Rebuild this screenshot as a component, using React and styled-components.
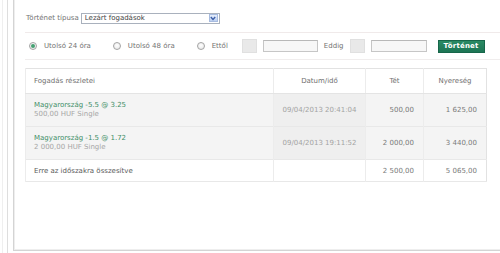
import React from 'react'
import styled, { createGlobalStyle } from 'styled-components'

const GlobalStyle = createGlobalStyle`
  html, body {
    margin: 0;
    padding: 0;
    background: #fff;
  }
  body {
    font-family: 'DejaVu Sans', Verdana, sans-serif;
    font-size: 7px;
    color: #707070;
  }
`

const Shell = styled.div`
  height: 253px;
  padding-left: 2px;
  box-sizing: border-box;
  display: flex;
`

const Rail = styled.div`
  flex: 1;
  display: flex;
  border-left: 1px solid #efefef;
  padding-left: 4px;
`

const InnerRail = styled.div`
  flex: 1;
  display: flex;
  align-items: flex-start;
  border-left: 1px solid #dedede;
  padding-left: 5px;
`

const Panel = styled.div`
  width: 483px;
  height: 250px;
  border: 1px solid #d4d4d4;
  border-top: none;
  box-shadow: inset 1px 0 0 #eeeeee, inset -1px 0 0 #eeeeee, inset 0 -1px 0 #eeeeee;
  padding: 0 10px 0 11px;
  box-sizing: content-box;
  background: #fff;
`

const TypeRow = styled.div`
  display: flex;
  align-items: center;
  gap: 2px;
  height: 12px;
  margin-top: 12px;
  padding: 0 0 8px 1px;
  border-bottom: 1px solid #f0eaea;
`

const Label = styled.span`
  color: ${p => p.$color || '#737373'};
  white-space: nowrap;
`

const SelectBox = styled.div`
  width: 133px;
  height: 9px;
  border: 1px solid #a9b1bd;
  display: flex;
  align-items: center;
  justify-content: space-between;
  padding: 0 1px 0 3px;
  box-sizing: content-box;
  color: #444;
  background: #fff;
`

const ArrowBox = styled.span`
  width: 9px;
  height: 8px;
  border: 1px solid #a7bbdf;
  background: linear-gradient(#e6eefb, #bdd0f1);
  display: flex;
  align-items: center;
  justify-content: center;
  box-sizing: border-box;
`

const RangeRow = styled.div`
  display: flex;
  align-items: center;
  height: 26px;
  padding-left: 4px;
  border-bottom: 1px solid #f0eded;
`

const RadioItem = styled.label`
  display: flex;
  align-items: center;
  gap: 7px;
  margin-right: ${p => p.$gap || 0}px;
`

const RadioDot = styled.span`
  width: 8px;
  height: 8px;
  border-radius: 50%;
  border: 1px solid #a4a4a4;
  background: radial-gradient(circle at 50% 40%, #fff, #e4e4e4);
  box-sizing: border-box;
  display: flex;
  align-items: center;
  justify-content: center;
  &::after {
    content: '';
    width: 4px;
    height: 4px;
    border-radius: 50%;
    background: ${p => (p.$checked ? '#45a072' : 'transparent')};
  }
`

const DateGroup = styled.div`
  display: flex;
  align-items: center;
  gap: 6px;
  margin-left: ${p => p.$offset || 0}px;
`

const PickerSquare = styled.span`
  width: 15px;
  height: 14px;
  background: #e9e9e9;
  border: 1px solid #e0e0e0;
  box-sizing: border-box;
`

const TextInput = styled.span`
  width: ${p => p.$w}px;
  height: 12px;
  border: 1px solid #c6c6c6;
  border-top-color: #b8b8b8;
  background: #f7f7f7;
  box-sizing: border-box;
`

const SubmitButton = styled.button`
  margin-left: 11px;
  width: 47px;
  height: 13px;
  padding: 0;
  border: 1px solid #17664a;
  background: linear-gradient(#2a8a64, #1d7554);
  color: #fff;
  font-family: 'DejaVu Sans', Verdana, sans-serif;
  font-size: 7px;
  font-weight: bold;
  letter-spacing: 0.2px;
`

const Table = styled.table`
  margin-top: 8px;
  width: 462px;
  border-collapse: collapse;
  table-layout: fixed;
  border: 1px solid #e2e2e2;
`

const HeadCell = styled.th`
  height: 24px;
  padding: 0;
  padding-left: ${p => (p.$align === 'left' ? '8px' : '0')};
  text-align: ${p => p.$align || 'center'};
  font-weight: normal;
  color: #707070;
  background: #fff;
  border-left: 1px solid #ececec;
  border-bottom: 1px solid #e4e4e4;
`

const Row = styled.tr`
  background: ${p => (p.$shaded ? '#f4f4f4' : '#fff')};
  border-bottom: 1px solid #e8e8e8;
`

const Cell = styled.td`
  height: ${p => p.$h || 32}px;
  padding: ${p => (p.$align === 'left' ? '0 0 0 8px' : p.$align === 'right' ? '0 9px 0 0' : '0')};
  text-align: ${p => p.$align || 'center'};
  color: ${p => p.$color || '#7a7a7a'};
  background: ${p => p.$bg || 'transparent'};
  border-left: 1px solid #ececec;
  white-space: nowrap;
`

const BetTitle = styled.div`
  color: #3f8f68;
  line-height: 9px;
`

const BetSub = styled.div`
  color: #a6a6a6;
  line-height: 9px;
`

const Chevron = () => (
  <svg width="6" height="5" viewBox="0 0 6 5">
    <polyline points="0.8,1 3,3.4 5.2,1" fill="none" stroke="#3d5fa8" strokeWidth="1.4" />
  </svg>
)

const bets = [
  { title: 'Magyarország -5.5 @ 3.25', sub: '500,00 HUF Single', date: '09/04/2013 20:41:04', stake: '500,00', win: '1 625,00' },
  { title: 'Magyarország -1.5 @ 1.72', sub: '2 000,00 HUF Single', date: '09/04/2013 19:11:52', stake: '2 000,00', win: '3 440,00' }
]

const App = () => (
  <>
    <GlobalStyle />
    <Shell>
      <Rail>
        <InnerRail>
          <Panel>
            <TypeRow>
              <Label>Történet típusa</Label>
              <SelectBox>
                <span>Lezárt fogadások</span>
                <ArrowBox>
                  <Chevron />
                </ArrowBox>
              </SelectBox>
            </TypeRow>

            <RangeRow>
              <RadioItem $gap={22}>
                <RadioDot $checked />
                <Label>Utolsó 24 óra</Label>
              </RadioItem>
              <RadioItem $gap={22}>
                <RadioDot />
                <Label>Utolsó 48 óra</Label>
              </RadioItem>
              <RadioItem>
                <RadioDot />
                <Label>Ettől</Label>
              </RadioItem>
              <DateGroup $offset={14}>
                <PickerSquare />
                <TextInput $w={55} />
                <Label>Eddig</Label>
                <PickerSquare />
                <TextInput $w={56} />
              </DateGroup>
              <SubmitButton>Történet</SubmitButton>
            </RangeRow>

            <Table>
              <colgroup>
                <col style={{ width: 248 }} />
                <col style={{ width: 92 }} />
                <col style={{ width: 58 }} />
                <col />
              </colgroup>
              <thead>
                <tr>
                  <HeadCell $align="left">Fogadás részletei</HeadCell>
                  <HeadCell>Datum/idő</HeadCell>
                  <HeadCell>Tét</HeadCell>
                  <HeadCell>Nyereség</HeadCell>
                </tr>
              </thead>
              <tbody>
                {bets.map(b => (
                  <Row $shaded key={b.date}>
                    <Cell $align="left">
                      <BetTitle>{b.title}</BetTitle>
                      <BetSub>{b.sub}</BetSub>
                    </Cell>
                    <Cell $color="#a3a3a3" $bg="#efefef">{b.date}</Cell>
                    <Cell $align="right">{b.stake}</Cell>
                    <Cell $align="right">{b.win}</Cell>
                  </Row>
                ))}
                <Row>
                  <Cell $align="left" $h={21} $color="#5a5a5a">Erre az időszakra összesítve</Cell>
                  <Cell $h={21} />
                  <Cell $align="right" $h={21}>2 500,00</Cell>
                  <Cell $align="right" $h={21}>5 065,00</Cell>
                </Row>
              </tbody>
            </Table>
          </Panel>
        </InnerRail>
      </Rail>
    </Shell>
  </>
)

export default App
